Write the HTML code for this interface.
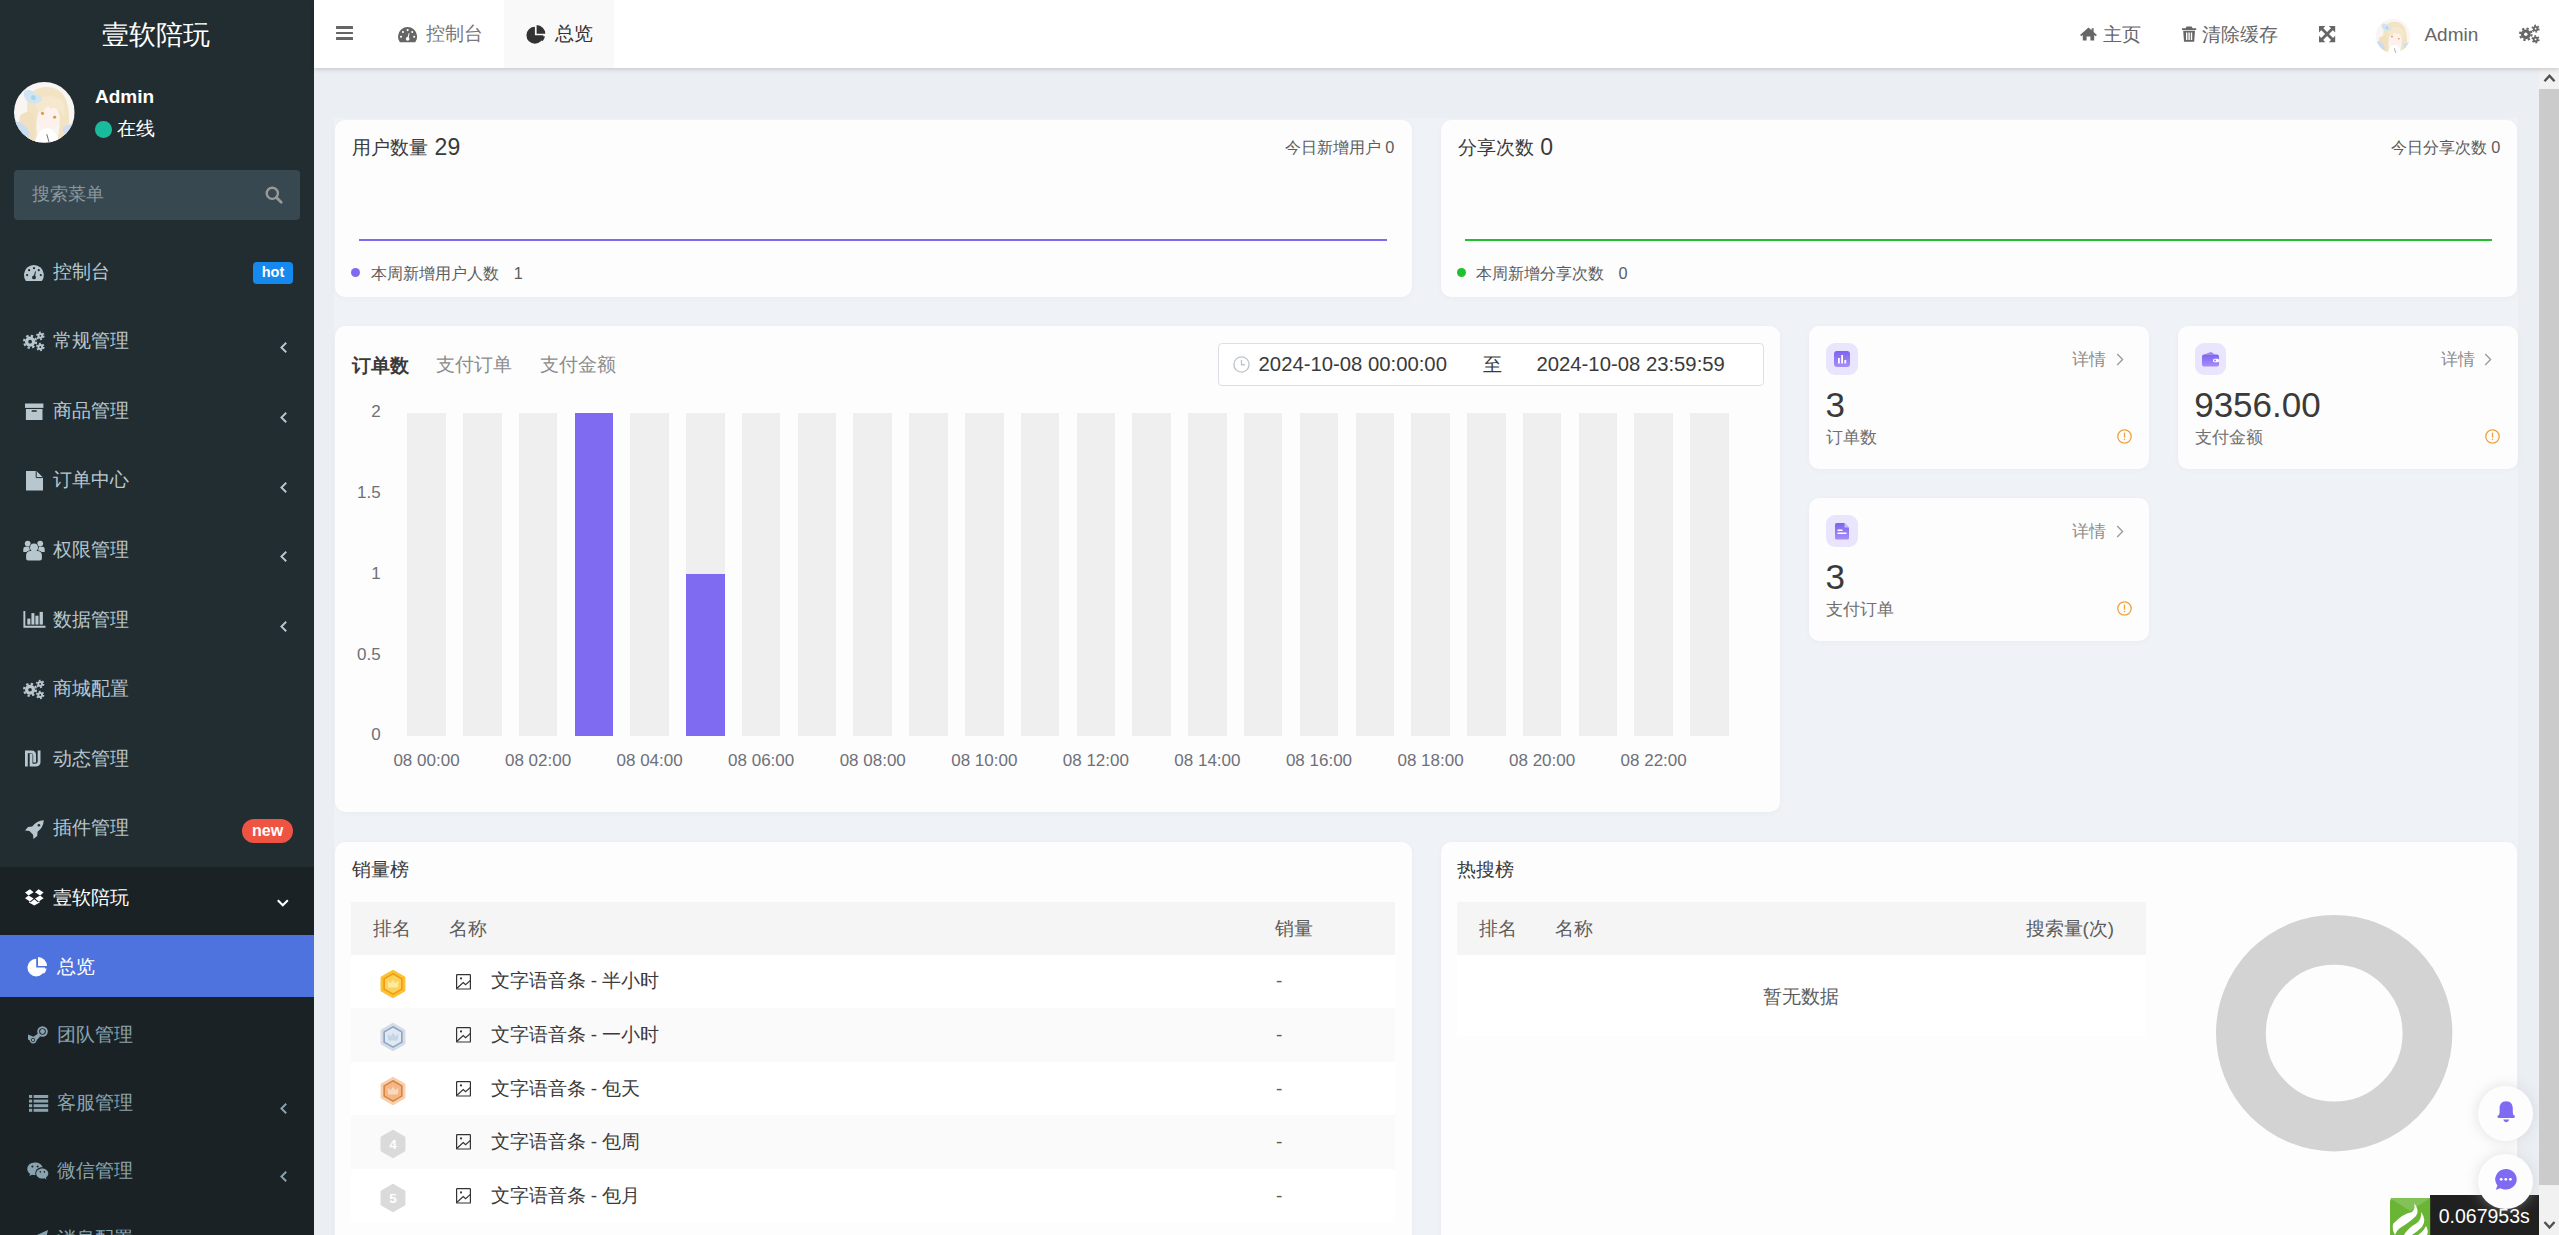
<!DOCTYPE html>
<html><head><meta charset="utf-8">
<style>
*{margin:0;padding:0;box-sizing:border-box}
html,body{width:2559px;height:1235px;overflow:hidden;background:#ebeef3;font-family:"Liberation Sans",sans-serif}
.a{position:absolute;white-space:nowrap}
svg{position:absolute;overflow:visible}
.card{position:absolute;background:#fdfdfd;border-radius:10px;box-shadow:0 1px 6px rgba(0,0,0,.035)}
</style></head><body>
<div class="a" style="left:0;top:0;width:314px;height:1235px;background:#222d32"></div>
<div class="a" style="left:-244px;width:800px;text-align:center;top:7.60px;font-size:27px;line-height:54px;color:#fff;">壹软陪玩</div>
<svg style="left:14.25px;top:82px" width="60.7" height="60.7" viewBox="0 0 100 100"><defs><clipPath id="avc"><circle cx="50" cy="50" r="50"/></clipPath></defs><g clip-path="url(#avc)"><rect x="0" y="0" width="100" height="100" fill="#f8f5f3"/><path d="M22,45 Q18,12 52,8 Q86,8 90,48 Q94,82 84,100 H70 Q78,70 74,52 L40,52 Q34,70 40,100 H26 Q14,75 22,45 Z" fill="#f2e3c4"/><path d="M10,55 Q30,40 34,62 Q36,80 30,100 H12 Q4,80 10,55 Z" fill="#f0e0bf"/><ellipse cx="57" cy="58" rx="18" ry="21" fill="#fcf1ec"/><path d="M34,34 Q52,14 80,30 Q86,44 82,56 Q72,38 60,44 Q56,34 46,52 Q36,46 34,34 Z" fill="#f5e8cc"/><ellipse cx="47" cy="52" rx="2.6" ry="2.4" fill="#d69a4a"/><ellipse cx="67" cy="58" rx="2.6" ry="2.4" fill="#d69a4a"/><path d="M18,14 Q30,10 36,22 Q44,18 46,30 Q38,38 30,34 Q22,36 18,26 Q14,20 18,14 Z" fill="#cfe6f2"/><circle cx="32" cy="26" r="4" fill="#a9d3ea"/><path d="M0,64 Q18,66 26,84 L22,100 H0 Z" fill="#c9dcf0"/><path d="M80,74 Q94,70 100,66 V84 Q90,88 82,86 Z" fill="#cddff0"/><path d="M34,100 Q38,80 54,76 Q70,78 74,100 Z" fill="#ffffff"/><path d="M54,86 L58,100" stroke="#6b6b6b" stroke-width="1.6"/></g></svg>
<div class="a" style="left:95px;top:77.80px;font-size:19px;line-height:38px;color:#fff;font-weight:700;">Admin</div>
<div class="a" style="left:95.3px;top:121px;width:16.5px;height:16.5px;border-radius:50%;background:#18bc9c"></div>
<div class="a" style="left:117px;top:110.30px;font-size:18.8px;line-height:38px;color:#fff;">在线</div>
<div class="a" style="left:14px;top:170px;width:286px;height:50px;background:#374850;border-radius:4px;"></div>
<div class="a" style="left:32px;top:176.40px;font-size:18.2px;line-height:36px;color:#8b979c;">搜索菜单</div>
<svg style="left:265px;top:186px;" width="18" height="18" viewBox="0 0 18 18"><circle cx="7.3" cy="7.3" r="5.6" fill="none" stroke="#999" stroke-width="2.4"/><path d="M11.4,11.4 L16.2,16.2" stroke="#999" stroke-width="2.8" stroke-linecap="round"/></svg>
<div class="a" style="left:53px;top:252.70px;font-size:18.8px;line-height:38px;color:#b8c7ce;">控制台</div>
<svg style="left:24px;top:264.8px;" width="20" height="16.2" viewBox="0 0 20 16.2"><path d="M1.9,15.9 A9.95,9.95 0 1 1 17.9,15.9 Z" fill="#b8c7ce"/><circle cx="3.1" cy="10.1" r="1.1" fill="#222d32"/><circle cx="5.1" cy="5.2" r="1.1" fill="#222d32"/><circle cx="10" cy="3.2" r="1.1" fill="#222d32"/><circle cx="14.75" cy="5.2" r="1.1" fill="#222d32"/><circle cx="16.8" cy="10.1" r="1.1" fill="#222d32"/><path d="M9.4,12 L11.2,6.2 L12,6.4 L10.8,12.4 Z" fill="#222d32"/><circle cx="10" cy="12.4" r="1.9" fill="#222d32"/></svg>
<div class="a" style="left:53px;top:322.26px;font-size:18.8px;line-height:38px;color:#b8c7ce;">常规管理</div>
<svg style="left:23px;top:332px;" width="21.2" height="19" viewBox="0 0 20.3 18.2"><circle cx="6.8" cy="9.3" r="4.9" fill="#b8c7ce"/><circle cx="6.8" cy="9.3" r="5.78" fill="none" stroke="#b8c7ce" stroke-width="2.10" stroke-dasharray="2.27 2.27"/><circle cx="6.8" cy="9.3" r="1.76" fill="#222d32"/><circle cx="16.6" cy="3.7" r="2.8" fill="#b8c7ce"/><circle cx="16.6" cy="3.7" r="3.30" fill="none" stroke="#b8c7ce" stroke-width="1.60" stroke-dasharray="1.73 1.73"/><circle cx="16.6" cy="3.7" r="0.90" fill="#222d32"/><circle cx="16.6" cy="14.4" r="2.8" fill="#b8c7ce"/><circle cx="16.6" cy="14.4" r="3.30" fill="none" stroke="#b8c7ce" stroke-width="1.60" stroke-dasharray="1.73 1.73"/><circle cx="16.6" cy="14.4" r="0.90" fill="#222d32"/></svg>
<svg style="left:279.6px;top:342.46px;" width="7" height="11" viewBox="0 0 7 11"><path d="M6.2,0.8 L1.4,5.5 L6.2,10.2" fill="none" stroke="#b8c7ce" stroke-width="1.9"/></svg>
<div class="a" style="left:53px;top:391.82px;font-size:18.8px;line-height:38px;color:#b8c7ce;">商品管理</div>
<svg style="left:24.7px;top:402.8px;" width="18.4" height="17" viewBox="0 0 18.4 17"><rect x="0" y="0.5" width="18.4" height="4.4" fill="#b8c7ce"/><rect x="0.9" y="6" width="16.6" height="11" fill="#b8c7ce"/><rect x="6.6" y="7.3" width="5.2" height="1.5" rx="0.5" fill="#222d32"/></svg>
<svg style="left:279.6px;top:412.02px;" width="7" height="11" viewBox="0 0 7 11"><path d="M6.2,0.8 L1.4,5.5 L6.2,10.2" fill="none" stroke="#b8c7ce" stroke-width="1.9"/></svg>
<div class="a" style="left:53px;top:461.38px;font-size:18.8px;line-height:38px;color:#b8c7ce;">订单中心</div>
<svg style="left:25.8px;top:470.6px;" width="17" height="19.5" viewBox="0 0 17 19.5"><path d="M0,0 H10.5 L17,6.5 V19.5 H0 Z" fill="#b8c7ce"/><path d="M11.2,0 L17,5.8 H11.2 Z" fill="#222d32" opacity="0"/><path d="M10.2,0.2 V6.6 H16.8" fill="none" stroke="#222d32" stroke-width="1"/></svg>
<svg style="left:279.6px;top:481.58px;" width="7" height="11" viewBox="0 0 7 11"><path d="M6.2,0.8 L1.4,5.5 L6.2,10.2" fill="none" stroke="#b8c7ce" stroke-width="1.9"/></svg>
<div class="a" style="left:53px;top:530.94px;font-size:18.8px;line-height:38px;color:#b8c7ce;">权限管理</div>
<svg style="left:23px;top:540.5px;" width="22" height="19.8" viewBox="0 0 22 19.8"><circle cx="4.7" cy="2.6" r="2.9" fill="#b8c7ce"/><circle cx="17.2" cy="2.6" r="2.9" fill="#b8c7ce"/><path d="M0.3,10.9 V8 Q0.3,5.7 2.5,5.7 H6.8 V10.9 Z" fill="#b8c7ce"/><path d="M21.7,10.9 V8 Q21.7,5.7 19.5,5.7 H15.2 V10.9 Z" fill="#b8c7ce"/><circle cx="11" cy="6.4" r="4.6" fill="#222d32"/><path d="M2.4,19.8 V14.6 Q2.4,9.4 7.5,9.4 H14.5 Q19.6,9.4 19.6,14.6 V19.8 Z" fill="#222d32"/><circle cx="11" cy="6.5" r="3.95" fill="#b8c7ce"/><path d="M3.1,17.4 V14.6 Q3.1,10.1 7.6,10.1 H14.4 Q18.9,10.1 18.9,14.6 V17.4 Q18.9,19.4 16.9,19.4 H5.1 Q3.1,19.4 3.1,17.4 Z" fill="#b8c7ce"/></svg>
<svg style="left:279.6px;top:551.1400000000001px;" width="7" height="11" viewBox="0 0 7 11"><path d="M6.2,0.8 L1.4,5.5 L6.2,10.2" fill="none" stroke="#b8c7ce" stroke-width="1.9"/></svg>
<div class="a" style="left:53px;top:600.50px;font-size:18.8px;line-height:38px;color:#b8c7ce;">数据管理</div>
<svg style="left:22.6px;top:611.3px;" width="22.5" height="16.7" viewBox="0 0 22.5 16.7"><path d="M0.4,0 H2.3 V14.7 H22.5 V16.7 H0.4 Z" fill="#b8c7ce"/><rect x="4.3" y="7.6" width="3.1" height="6" fill="#b8c7ce"/><rect x="8.4" y="2.1" width="3" height="11.5" fill="#b8c7ce"/><rect x="12.4" y="4.7" width="3.1" height="8.9" fill="#b8c7ce"/><rect x="16.6" y="0.9" width="3.3" height="12.7" fill="#b8c7ce"/></svg>
<svg style="left:279.6px;top:620.7px;" width="7" height="11" viewBox="0 0 7 11"><path d="M6.2,0.8 L1.4,5.5 L6.2,10.2" fill="none" stroke="#b8c7ce" stroke-width="1.9"/></svg>
<div class="a" style="left:53px;top:670.06px;font-size:18.8px;line-height:38px;color:#b8c7ce;">商城配置</div>
<svg style="left:23.3px;top:679.6px;" width="21" height="19" viewBox="0 0 20.3 18.2"><circle cx="6.8" cy="9.3" r="4.9" fill="#b8c7ce"/><circle cx="6.8" cy="9.3" r="5.78" fill="none" stroke="#b8c7ce" stroke-width="2.10" stroke-dasharray="2.27 2.27"/><circle cx="6.8" cy="9.3" r="1.76" fill="#222d32"/><circle cx="16.6" cy="3.7" r="2.8" fill="#b8c7ce"/><circle cx="16.6" cy="3.7" r="3.30" fill="none" stroke="#b8c7ce" stroke-width="1.60" stroke-dasharray="1.73 1.73"/><circle cx="16.6" cy="3.7" r="0.90" fill="#222d32"/><circle cx="16.6" cy="14.4" r="2.8" fill="#b8c7ce"/><circle cx="16.6" cy="14.4" r="3.30" fill="none" stroke="#b8c7ce" stroke-width="1.60" stroke-dasharray="1.73 1.73"/><circle cx="16.6" cy="14.4" r="0.90" fill="#222d32"/></svg>
<div class="a" style="left:53px;top:739.62px;font-size:18.8px;line-height:38px;color:#b8c7ce;">动态管理</div>
<svg style="left:25.4px;top:750px;" width="15.6" height="17" viewBox="0 0 15.6 17"><path d="M0,16.5 V0.5 H6.5 Q11,0.5 11,5 V12.5 H8.2 V5.2 Q8.2,3.2 6.3,3.2 H2.8 V16.5 Z" fill="#b8c7ce"/><path d="M15.5,0.5 V12 Q15.5,16.5 10.5,16.5 H4.7 V3.8 H7.5 V13.8 H10.2 Q12.7,13.8 12.7,11.5 V0.5 Z" fill="#b8c7ce"/></svg>
<div class="a" style="left:53px;top:809.18px;font-size:18.8px;line-height:38px;color:#b8c7ce;">插件管理</div>
<svg style="left:24.6px;top:819.7px;" width="19" height="18.8" viewBox="0 0 19 18.8"><path d="M18.8,0.2 Q11.5,0.8 7.2,6.4 L3,6.9 L0,10.6 L4.4,11 L8.1,14.7 L8.4,18.9 L12.2,16 L12.6,11.8 Q18.3,7.4 18.8,0.2 Z" fill="#b8c7ce"/><circle cx="13.9" cy="5.2" r="1.3" fill="#222d32"/></svg>
<div class="a" style="left:253px;top:262px;width:40px;height:22px;border-radius:4px;background:#1689ef;color:#fff;font-weight:700;font-size:14.5px;line-height:21px;text-align:center">hot</div>
<div class="a" style="left:242.3px;top:819px;width:50.5px;height:24px;border-radius:12px;background:#ef5443;color:#fff;font-weight:700;font-size:16px;line-height:23px;text-align:center">new</div>
<div class="a" style="left:0px;top:867px;width:314px;height:368px;background:#1a2226;"></div>
<div class="a" style="left:53px;top:878.70px;font-size:18.8px;line-height:38px;color:#fff;">壹软陪玩</div>
<svg style="left:24.9px;top:888.8px;" width="18.6" height="16.8" viewBox="0 0 18.6 16.8"><path d="M5,0.3 L0,3.6 L3.5,6.4 L8.6,3.3 Z" fill="#fff"/><path d="M13.6,0.3 L18.6,3.6 L15.1,6.4 L10,3.3 Z" fill="#fff"/><path d="M0,9.2 L5,12.5 L8.6,9.5 L3.5,6.4 Z" fill="#fff"/><path d="M18.6,9.2 L13.6,12.5 L10,9.5 L15.1,6.4 Z" fill="#fff"/><path d="M9.3,10.2 L5.7,13.2 L4,12.2 V13.4 L9.3,16.6 L14.6,13.4 V12.2 L12.9,13.2 Z" fill="#fff"/></svg>
<svg style="left:277px;top:899px;" width="11.6" height="8" viewBox="0 0 11.6 7.4"><path d="M0.8,1 L5.8,6 L10.8,1" fill="none" stroke="#fff" stroke-width="2.1"/></svg>
<div class="a" style="left:0px;top:935px;width:314px;height:62px;background:#4e72de;"></div>
<div class="a" style="left:57px;top:947.50px;font-size:18.8px;line-height:38px;color:#fff;">总览</div>
<svg style="left:28px;top:956.5px;" width="19" height="19" viewBox="0 0 19 19"><path d="M8.2,1.8 V10.6 H17 A8.8,8.8 0 1 1 8.2,1.8 Z" fill="#fff"/><path d="M10,0 A9,9 0 0 1 19,9 H10 Z" fill="#fff"/><path d="M10.4,11.6 H18.6 A9,9 0 0 1 16,16.8 Z" fill="#fff"/></svg>
<div class="a" style="left:57px;top:1015.60px;font-size:18.8px;line-height:38px;color:#8aa4af;">团队管理</div>
<svg style="left:28px;top:1026px;" width="20" height="17.5" viewBox="0 0 20 17.5"><circle cx="14.5" cy="5.5" r="5.3" fill="#8aa4af"/><circle cx="14.5" cy="5.5" r="3.3" fill="#1a2226"/><circle cx="14.5" cy="5.5" r="2.4" fill="#8aa4af"/><path d="M0,8.5 L5.5,10.8 L10.2,7.5 L12,10.8 L8.8,14 Q8,17.5 5,17.5 Q2,17.2 1.6,14.2 L0,13.6 Z" fill="#8aa4af"/><circle cx="5" cy="14" r="2.1" fill="#1a2226"/><circle cx="5" cy="14" r="1.3" fill="#8aa4af"/></svg>
<div class="a" style="left:57px;top:1083.60px;font-size:18.8px;line-height:38px;color:#8aa4af;">客服管理</div>
<svg style="left:28.8px;top:1094.5px;" width="19.2" height="16.8" viewBox="0 0 19.2 16.8"><rect x="0" y="0" width="3.2" height="3" fill="#8aa4af"/><rect x="4.6" y="0" width="14.6" height="3" fill="#8aa4af"/><rect x="0" y="4.6" width="3.2" height="3" fill="#8aa4af"/><rect x="4.6" y="4.6" width="14.6" height="3" fill="#8aa4af"/><rect x="0" y="9.2" width="3.2" height="3" fill="#8aa4af"/><rect x="4.6" y="9.2" width="14.6" height="3" fill="#8aa4af"/><rect x="0" y="13.8" width="3.2" height="3" fill="#8aa4af"/><rect x="4.6" y="13.8" width="14.6" height="3" fill="#8aa4af"/></svg>
<svg style="left:279.6px;top:1103.1px;" width="7" height="11" viewBox="0 0 7 11"><path d="M6.2,0.8 L1.4,5.5 L6.2,10.2" fill="none" stroke="#8aa4af" stroke-width="1.9"/></svg>
<div class="a" style="left:57px;top:1151.60px;font-size:18.8px;line-height:38px;color:#8aa4af;">微信管理</div>
<svg style="left:26.8px;top:1161.6px;" width="21.5" height="17.5" viewBox="0 0 21.5 17.5"><path d="M8,0.5 C3.6,0.5 0.3,3.3 0.3,6.9 C0.3,8.9 1.4,10.6 3.1,11.8 L2.4,14 L5,12.7 C6,13 7,13.1 8,13.1 L8.6,13.1 C8.4,12.5 8.3,11.9 8.3,11.3 C8.3,7.9 11.4,5.3 15.3,5.3 L15.6,5.3 C14.8,2.5 11.7,0.5 8,0.5 Z" fill="#8aa4af"/><path d="M15.4,6.4 C11.8,6.4 9.2,8.7 9.2,11.5 C9.2,14.3 11.8,16.6 15.4,16.6 C16.1,16.6 16.8,16.5 17.4,16.3 L19.5,17.4 L18.9,15.6 C20.3,14.6 21.3,13.2 21.3,11.5 C21.3,8.7 18.6,6.4 15.4,6.4 Z" fill="#8aa4af"/><circle cx="5.4" cy="4.6" r="1" fill="#1a2226"/><circle cx="10.6" cy="4.6" r="1" fill="#1a2226"/><circle cx="13.3" cy="9.9" r="0.8" fill="#1a2226"/><circle cx="17.4" cy="9.9" r="0.8" fill="#1a2226"/></svg>
<svg style="left:279.6px;top:1171.1px;" width="7" height="11" viewBox="0 0 7 11"><path d="M6.2,0.8 L1.4,5.5 L6.2,10.2" fill="none" stroke="#8aa4af" stroke-width="1.9"/></svg>
<div class="a" style="left:57px;top:1219.60px;font-size:18.8px;line-height:38px;color:#8aa4af;">消息配置</div>
<svg style="left:28px;top:1230px;" width="20" height="18" viewBox="0 0 20 18"><path d="M20,0 L0,9 L6,11 L8,18 L11,13 L16,17 Z" fill="#8aa4af"/></svg>
<div class="a" style="left:334px;top:118px;width:2184px;height:1117px;background:#eff2f6;"></div>
<div class="card" style="left:335px;top:120px;width:1077px;height:177px"></div>
<div class="a" style="left:352.3px;top:129.40px;font-size:18.8px;line-height:38px;color:#3a3a3a;">用户数量</div>
<div class="a" style="left:434.6px;top:124.00px;font-size:23px;line-height:46px;color:#3a3a3a;">29</div>
<div class="a" style="right:1164.6px;top:131.00px;font-size:16.3px;line-height:33px;color:#5c5c5c;">今日新增用户&nbsp;0</div>
<div class="a" style="left:358.8px;top:238.5px;width:1028.5px;height:2.4px;background:#7f6bf2;"></div>
<div class="a" style="left:351px;top:267.6px;width:9px;height:9px;border-radius:50%;background:#7f6bf2"></div>
<div class="a" style="left:370.8px;top:256.90px;font-size:16.3px;line-height:33px;color:#5c5c5c;">本周新增用户人数</div>
<div class="a" style="left:513.8px;top:256.50px;font-size:16.3px;line-height:33px;color:#5c5c5c;">1</div>
<div class="card" style="left:1441px;top:120px;width:1076px;height:177px"></div>
<div class="a" style="left:1457.5px;top:129.40px;font-size:18.8px;line-height:38px;color:#3a3a3a;">分享次数</div>
<div class="a" style="left:1540.3px;top:124.00px;font-size:23px;line-height:46px;color:#3a3a3a;">0</div>
<div class="a" style="right:58.59999999999991px;top:131.00px;font-size:16.3px;line-height:33px;color:#5c5c5c;">今日分享次数&nbsp;0</div>
<div class="a" style="left:1464.8px;top:238.5px;width:1027.5px;height:2.4px;background:#22c02e;"></div>
<div class="a" style="left:1456.7px;top:267.6px;width:9px;height:9px;border-radius:50%;background:#22c02e"></div>
<div class="a" style="left:1476.4px;top:256.90px;font-size:16.3px;line-height:33px;color:#5c5c5c;">本周新增分享次数</div>
<div class="a" style="left:1618.6px;top:256.50px;font-size:16.3px;line-height:33px;color:#5c5c5c;">0</div>
<div class="card" style="left:335px;top:326px;width:1445px;height:486px"></div>
<div class="a" style="left:351.9px;top:347.00px;font-size:18.8px;line-height:38px;color:#3a3a3a;font-weight:700;">订单数</div>
<div class="a" style="left:436px;top:346.00px;font-size:18.8px;line-height:38px;color:#8c8c8c;">支付订单</div>
<div class="a" style="left:540px;top:346.00px;font-size:18.8px;line-height:38px;color:#8c8c8c;">支付金额</div>
<div class="a" style="left:1218.3px;top:343.4px;width:545.6px;height:42.2px;background:#fff;border:1px solid #dcdfe6;border-radius:4px;"></div>
<svg style="left:1232.8px;top:356.3px;" width="17" height="17" viewBox="0 0 17 17"><circle cx="8.5" cy="8.5" r="7.6" fill="none" stroke="#c0c4cc" stroke-width="1.4"/><path d="M8.5,4 V8.8 H12" fill="none" stroke="#c0c4cc" stroke-width="1.4"/></svg>
<div class="a" style="left:1258.6px;top:344.25px;font-size:20.3px;line-height:41px;color:#3a3a3a;">2024-10-08 00:00:00</div>
<div class="a" style="left:1482.5px;top:345.75px;font-size:18.8px;line-height:38px;color:#3a3a3a;">至</div>
<div class="a" style="left:1536.5px;top:344.25px;font-size:20.3px;line-height:41px;color:#3a3a3a;">2024-10-08 23:59:59</div>
<div class="a" style="right:2178.4px;top:395.10px;font-size:17px;line-height:34px;color:#6e7079;">2</div>
<div class="a" style="right:2178.4px;top:476.00px;font-size:17px;line-height:34px;color:#6e7079;">1.5</div>
<div class="a" style="right:2178.4px;top:557.00px;font-size:17px;line-height:34px;color:#6e7079;">1</div>
<div class="a" style="right:2178.4px;top:637.50px;font-size:17px;line-height:34px;color:#6e7079;">0.5</div>
<div class="a" style="right:2178.4px;top:718.00px;font-size:17px;line-height:34px;color:#6e7079;">0</div>
<div class="a" style="left:407.25px;top:413.1px;width:38.5px;height:322.6px;background:#efefef;"></div>
<div class="a" style="left:463.03px;top:413.1px;width:38.5px;height:322.6px;background:#efefef;"></div>
<div class="a" style="left:518.81px;top:413.1px;width:38.5px;height:322.6px;background:#efefef;"></div>
<div class="a" style="left:574.59px;top:413.1px;width:38.5px;height:322.6px;background:#efefef;"></div>
<div class="a" style="left:574.59px;top:413.1px;width:38.5px;height:322.6px;background:#7f6bf2;"></div>
<div class="a" style="left:630.37px;top:413.1px;width:38.5px;height:322.6px;background:#efefef;"></div>
<div class="a" style="left:686.15px;top:413.1px;width:38.5px;height:322.6px;background:#efefef;"></div>
<div class="a" style="left:686.15px;top:574.4000000000001px;width:38.5px;height:161.3px;background:#7f6bf2;"></div>
<div class="a" style="left:741.93px;top:413.1px;width:38.5px;height:322.6px;background:#efefef;"></div>
<div class="a" style="left:797.71px;top:413.1px;width:38.5px;height:322.6px;background:#efefef;"></div>
<div class="a" style="left:853.49px;top:413.1px;width:38.5px;height:322.6px;background:#efefef;"></div>
<div class="a" style="left:909.27px;top:413.1px;width:38.5px;height:322.6px;background:#efefef;"></div>
<div class="a" style="left:965.05px;top:413.1px;width:38.5px;height:322.6px;background:#efefef;"></div>
<div class="a" style="left:1020.83px;top:413.1px;width:38.5px;height:322.6px;background:#efefef;"></div>
<div class="a" style="left:1076.61px;top:413.1px;width:38.5px;height:322.6px;background:#efefef;"></div>
<div class="a" style="left:1132.39px;top:413.1px;width:38.5px;height:322.6px;background:#efefef;"></div>
<div class="a" style="left:1188.17px;top:413.1px;width:38.5px;height:322.6px;background:#efefef;"></div>
<div class="a" style="left:1243.95px;top:413.1px;width:38.5px;height:322.6px;background:#efefef;"></div>
<div class="a" style="left:1299.73px;top:413.1px;width:38.5px;height:322.6px;background:#efefef;"></div>
<div class="a" style="left:1355.51px;top:413.1px;width:38.5px;height:322.6px;background:#efefef;"></div>
<div class="a" style="left:1411.29px;top:413.1px;width:38.5px;height:322.6px;background:#efefef;"></div>
<div class="a" style="left:1467.07px;top:413.1px;width:38.5px;height:322.6px;background:#efefef;"></div>
<div class="a" style="left:1522.85px;top:413.1px;width:38.5px;height:322.6px;background:#efefef;"></div>
<div class="a" style="left:1578.63px;top:413.1px;width:38.5px;height:322.6px;background:#efefef;"></div>
<div class="a" style="left:1634.41px;top:413.1px;width:38.5px;height:322.6px;background:#efefef;"></div>
<div class="a" style="left:1690.19px;top:413.1px;width:38.5px;height:322.6px;background:#efefef;"></div>
<div class="a" style="left:26.5px;width:800px;text-align:center;top:744.00px;font-size:17px;line-height:34px;color:#6e7079;">08 00:00</div>
<div class="a" style="left:138.05999999999995px;width:800px;text-align:center;top:744.00px;font-size:17px;line-height:34px;color:#6e7079;">08 02:00</div>
<div class="a" style="left:249.62px;width:800px;text-align:center;top:744.00px;font-size:17px;line-height:34px;color:#6e7079;">08 04:00</div>
<div class="a" style="left:361.18000000000006px;width:800px;text-align:center;top:744.00px;font-size:17px;line-height:34px;color:#6e7079;">08 06:00</div>
<div class="a" style="left:472.74px;width:800px;text-align:center;top:744.00px;font-size:17px;line-height:34px;color:#6e7079;">08 08:00</div>
<div class="a" style="left:584.3px;width:800px;text-align:center;top:744.00px;font-size:17px;line-height:34px;color:#6e7079;">08 10:00</div>
<div class="a" style="left:695.8600000000001px;width:800px;text-align:center;top:744.00px;font-size:17px;line-height:34px;color:#6e7079;">08 12:00</div>
<div class="a" style="left:807.4200000000001px;width:800px;text-align:center;top:744.00px;font-size:17px;line-height:34px;color:#6e7079;">08 14:00</div>
<div class="a" style="left:918.98px;width:800px;text-align:center;top:744.00px;font-size:17px;line-height:34px;color:#6e7079;">08 16:00</div>
<div class="a" style="left:1030.54px;width:800px;text-align:center;top:744.00px;font-size:17px;line-height:34px;color:#6e7079;">08 18:00</div>
<div class="a" style="left:1142.1px;width:800px;text-align:center;top:744.00px;font-size:17px;line-height:34px;color:#6e7079;">08 20:00</div>
<div class="a" style="left:1253.66px;width:800px;text-align:center;top:744.00px;font-size:17px;line-height:34px;color:#6e7079;">08 22:00</div>
<div class="card" style="left:1809px;top:326px;width:340px;height:143px"></div>
<div class="a" style="left:1826.1px;top:343.1px;width:31.7px;height:31.7px;background:#e9e5fd;border-radius:9px;"></div>
<svg style="left:1834.0px;top:351.0px;" width="16" height="16" viewBox="0 0 16 16"><defs><linearGradient id="gbar" x1="0" y1="0" x2="0" y2="1"><stop offset="0" stop-color="#7e63f0"/><stop offset="1" stop-color="#a78ff7"/></linearGradient></defs><rect x="0" y="0" width="16" height="16" rx="3" fill="url(#gbar)"/><rect x="4" y="7" width="1.8" height="5.5" fill="#fff"/><rect x="7.2" y="4" width="1.8" height="8.5" fill="#fff"/><rect x="10.4" y="9" width="1.8" height="3.5" fill="#fff"/></svg>
<div class="a" style="left:2072.3px;top:342.70px;font-size:16.5px;line-height:33px;color:#8c8c8c;">详情</div>
<svg style="left:2115.5px;top:353.0px;" width="8" height="13" viewBox="0 0 8 13"><path d="M1.2,1 L6.6,6.5 L1.2,12" fill="none" stroke="#999" stroke-width="1.3"/></svg>
<div class="a" style="left:1825.6px;top:370.00px;font-size:35px;line-height:70px;color:#3a3a3a;">3</div>
<div class="a" style="left:1826px;top:420.60px;font-size:16.5px;line-height:33px;color:#707070;">订单数</div>
<svg style="left:2116.7px;top:428.5px;" width="15" height="15" viewBox="0 0 15 15"><circle cx="7.5" cy="7.5" r="6.7" fill="none" stroke="#f0a33a" stroke-width="1.3"/><rect x="6.85" y="3.6" width="1.3" height="5" fill="#f0a33a"/><rect x="6.85" y="9.8" width="1.3" height="1.4" fill="#f0a33a"/></svg>
<div class="card" style="left:2177.6px;top:326px;width:340px;height:143px"></div>
<div class="a" style="left:2194.7px;top:343.1px;width:31.7px;height:31.7px;background:#e9e5fd;border-radius:9px;"></div>
<svg style="left:2202.1px;top:351.5px;" width="17" height="15" viewBox="0 0 17 15"><defs><linearGradient id="gwallet" x1="0" y1="0" x2="0" y2="1"><stop offset="0" stop-color="#7e63f0"/><stop offset="1" stop-color="#a78ff7"/></linearGradient></defs><path d="M9,0 L13,2.5 H2 Z" fill="#9b86f5"/><rect x="0" y="2.5" width="17" height="12" rx="2" fill="url(#gwallet)"/><rect x="11" y="6.8" width="6" height="3.4" rx="1.5" fill="#fff"/><circle cx="13" cy="8.5" r="0.9" fill="#8b74f2"/></svg>
<div class="a" style="left:2440.9px;top:342.70px;font-size:16.5px;line-height:33px;color:#8c8c8c;">详情</div>
<svg style="left:2484.1px;top:353.0px;" width="8" height="13" viewBox="0 0 8 13"><path d="M1.2,1 L6.6,6.5 L1.2,12" fill="none" stroke="#999" stroke-width="1.3"/></svg>
<div class="a" style="left:2194.2px;top:370.00px;font-size:35px;line-height:70px;color:#3a3a3a;">9356.00</div>
<div class="a" style="left:2194.6px;top:420.60px;font-size:16.5px;line-height:33px;color:#707070;">支付金额</div>
<svg style="left:2485.2999999999997px;top:428.5px;" width="15" height="15" viewBox="0 0 15 15"><circle cx="7.5" cy="7.5" r="6.7" fill="none" stroke="#f0a33a" stroke-width="1.3"/><rect x="6.85" y="3.6" width="1.3" height="5" fill="#f0a33a"/><rect x="6.85" y="9.8" width="1.3" height="1.4" fill="#f0a33a"/></svg>
<div class="card" style="left:1809px;top:498px;width:340px;height:143px"></div>
<div class="a" style="left:1826.1px;top:515.1px;width:31.7px;height:31.7px;background:#e9e5fd;border-radius:9px;"></div>
<svg style="left:1835.1px;top:522.7px;" width="14" height="16.5" viewBox="0 0 14 16.5"><defs><linearGradient id="gdoc" x1="0" y1="0" x2="0" y2="1"><stop offset="0" stop-color="#7e63f0"/><stop offset="1" stop-color="#a78ff7"/></linearGradient></defs><path d="M0,1.5 Q0,0 1.5,0 H9.5 L14,4.5 V15 Q14,16.5 12.5,16.5 H1.5 Q0,16.5 0,15 Z" fill="url(#gdoc)"/><path d="M9.5,0 V4.5 H14" fill="#c9bcfa"/><rect x="2.5" y="6.5" width="5" height="1.5" fill="#fff"/><rect x="2.5" y="9.5" width="9" height="1.5" fill="#fff"/></svg>
<div class="a" style="left:2072.3px;top:514.70px;font-size:16.5px;line-height:33px;color:#8c8c8c;">详情</div>
<svg style="left:2115.5px;top:525.0px;" width="8" height="13" viewBox="0 0 8 13"><path d="M1.2,1 L6.6,6.5 L1.2,12" fill="none" stroke="#999" stroke-width="1.3"/></svg>
<div class="a" style="left:1825.6px;top:542.00px;font-size:35px;line-height:70px;color:#3a3a3a;">3</div>
<div class="a" style="left:1826px;top:592.60px;font-size:16.5px;line-height:33px;color:#707070;">支付订单</div>
<svg style="left:2116.7px;top:600.5px;" width="15" height="15" viewBox="0 0 15 15"><circle cx="7.5" cy="7.5" r="6.7" fill="none" stroke="#f0a33a" stroke-width="1.3"/><rect x="6.85" y="3.6" width="1.3" height="5" fill="#f0a33a"/><rect x="6.85" y="9.8" width="1.3" height="1.4" fill="#f0a33a"/></svg>
<div class="card" style="left:335px;top:842px;width:1077px;height:450px"></div>
<div class="a" style="left:351.7px;top:850.70px;font-size:18.8px;line-height:38px;color:#3a3a3a;">销量榜</div>
<div class="a" style="left:350.8px;top:901.5px;width:1044.1px;height:53px;background:#f5f5f5;"></div>
<div class="a" style="left:373.4px;top:910.00px;font-size:18.8px;line-height:38px;color:#5c5c5c;">排名</div>
<div class="a" style="left:449.3px;top:910.00px;font-size:18.8px;line-height:38px;color:#5c5c5c;">名称</div>
<div class="a" style="left:1274.7px;top:910.00px;font-size:18.8px;line-height:38px;color:#5c5c5c;">销量</div>
<div class="a" style="left:350.8px;top:954.5px;width:1044.1px;height:53.6px;background:#fff;"></div>
<svg style="left:379.6px;top:969.5px;" width="26" height="28" viewBox="0 0 26 28"><polygon points="13.00,0.20 24.95,7.10 24.95,20.90 13.00,27.80 1.05,20.90 1.05,7.10" fill="#fbc230" stroke="#fbc230" stroke-width="1" stroke-linejoin="round"/><polygon points="13.00,3.80 21.83,8.90 21.83,19.10 13.00,24.20 4.17,19.10 4.17,8.90" fill="#fcd25a" stroke="#f29a12" stroke-width="1.6"/><path d="M8.2,17.5 L7.6,10.8 L10.6,13.2 L13,9.6 L15.4,13.2 L18.4,10.8 L17.8,17.5 Z" fill="#fde9a0"/></svg>
<svg style="left:456px;top:973.5px;" width="15" height="15.6" viewBox="0 0 15 15.6"><rect x="0.6" y="0.6" width="13.8" height="14.4" rx="0.6" fill="none" stroke="#333" stroke-width="1.2"/><path d="M1,14.2 L7.2,8.6 L9.6,10.8 L14.4,6.4" fill="none" stroke="#333" stroke-width="1.2"/><circle cx="5" cy="4.4" r="1.05" fill="#333"/></svg>
<div class="a" style="left:490.5px;top:962.30px;font-size:19px;line-height:38px;color:#3a3a3a;">文字语音条 - 半小时</div>
<div class="a" style="left:1276px;top:962.30px;font-size:19px;line-height:38px;color:#5c5c5c;">-</div>
<div class="a" style="left:350.8px;top:1008.1px;width:1044.1px;height:53.6px;background:#fafafa;"></div>
<svg style="left:379.6px;top:1023.1000000000001px;" width="26" height="28" viewBox="0 0 26 28"><polygon points="13.00,0.20 24.95,7.10 24.95,20.90 13.00,27.80 1.05,20.90 1.05,7.10" fill="#d3dce7" stroke="#d3dce7" stroke-width="1" stroke-linejoin="round"/><polygon points="13.00,3.80 21.83,8.90 21.83,19.10 13.00,24.20 4.17,19.10 4.17,8.90" fill="#dfe8f3" stroke="#8ea4bf" stroke-width="1.6"/><path d="M8.2,17.5 L7.6,10.8 L10.6,13.2 L13,9.6 L15.4,13.2 L18.4,10.8 L17.8,17.5 Z" fill="#c5d5e8"/></svg>
<svg style="left:456px;top:1027.1000000000001px;" width="15" height="15.6" viewBox="0 0 15 15.6"><rect x="0.6" y="0.6" width="13.8" height="14.4" rx="0.6" fill="none" stroke="#333" stroke-width="1.2"/><path d="M1,14.2 L7.2,8.6 L9.6,10.8 L14.4,6.4" fill="none" stroke="#333" stroke-width="1.2"/><circle cx="5" cy="4.4" r="1.05" fill="#333"/></svg>
<div class="a" style="left:490.5px;top:1015.90px;font-size:19px;line-height:38px;color:#3a3a3a;">文字语音条 - 一小时</div>
<div class="a" style="left:1276px;top:1015.90px;font-size:19px;line-height:38px;color:#5c5c5c;">-</div>
<div class="a" style="left:350.8px;top:1061.7px;width:1044.1px;height:53.6px;background:#fff;"></div>
<svg style="left:379.6px;top:1076.7px;" width="26" height="28" viewBox="0 0 26 28"><polygon points="13.00,0.20 24.95,7.10 24.95,20.90 13.00,27.80 1.05,20.90 1.05,7.10" fill="#f6cfae" stroke="#f6cfae" stroke-width="1" stroke-linejoin="round"/><polygon points="13.00,3.80 21.83,8.90 21.83,19.10 13.00,24.20 4.17,19.10 4.17,8.90" fill="#f2b687" stroke="#d9853e" stroke-width="1.6"/><path d="M8.2,17.5 L7.6,10.8 L10.6,13.2 L13,9.6 L15.4,13.2 L18.4,10.8 L17.8,17.5 Z" fill="#f8d9bd"/></svg>
<svg style="left:456px;top:1080.7px;" width="15" height="15.6" viewBox="0 0 15 15.6"><rect x="0.6" y="0.6" width="13.8" height="14.4" rx="0.6" fill="none" stroke="#333" stroke-width="1.2"/><path d="M1,14.2 L7.2,8.6 L9.6,10.8 L14.4,6.4" fill="none" stroke="#333" stroke-width="1.2"/><circle cx="5" cy="4.4" r="1.05" fill="#333"/></svg>
<div class="a" style="left:490.5px;top:1069.50px;font-size:19px;line-height:38px;color:#3a3a3a;">文字语音条 - 包天</div>
<div class="a" style="left:1276px;top:1069.50px;font-size:19px;line-height:38px;color:#5c5c5c;">-</div>
<div class="a" style="left:350.8px;top:1115.3px;width:1044.1px;height:53.6px;background:#fafafa;"></div>
<svg style="left:379.6px;top:1130.3px;" width="26" height="28" viewBox="0 0 26 28"><polygon points="13.00,0.20 24.95,7.10 24.95,20.90 13.00,27.80 1.05,20.90 1.05,7.10" fill="#dadada" stroke="#dadada" stroke-width="1" stroke-linejoin="round"/><text x="13" y="18.8" text-anchor="middle" font-family="Liberation Sans" font-weight="700" font-size="13.5" fill="#fff">4</text></svg>
<svg style="left:456px;top:1134.3px;" width="15" height="15.6" viewBox="0 0 15 15.6"><rect x="0.6" y="0.6" width="13.8" height="14.4" rx="0.6" fill="none" stroke="#333" stroke-width="1.2"/><path d="M1,14.2 L7.2,8.6 L9.6,10.8 L14.4,6.4" fill="none" stroke="#333" stroke-width="1.2"/><circle cx="5" cy="4.4" r="1.05" fill="#333"/></svg>
<div class="a" style="left:490.5px;top:1123.10px;font-size:19px;line-height:38px;color:#3a3a3a;">文字语音条 - 包周</div>
<div class="a" style="left:1276px;top:1123.10px;font-size:19px;line-height:38px;color:#5c5c5c;">-</div>
<div class="a" style="left:350.8px;top:1168.9px;width:1044.1px;height:53.6px;background:#fff;"></div>
<svg style="left:379.6px;top:1183.9px;" width="26" height="28" viewBox="0 0 26 28"><polygon points="13.00,0.20 24.95,7.10 24.95,20.90 13.00,27.80 1.05,20.90 1.05,7.10" fill="#dadada" stroke="#dadada" stroke-width="1" stroke-linejoin="round"/><text x="13" y="18.8" text-anchor="middle" font-family="Liberation Sans" font-weight="700" font-size="13.5" fill="#fff">5</text></svg>
<svg style="left:456px;top:1187.9px;" width="15" height="15.6" viewBox="0 0 15 15.6"><rect x="0.6" y="0.6" width="13.8" height="14.4" rx="0.6" fill="none" stroke="#333" stroke-width="1.2"/><path d="M1,14.2 L7.2,8.6 L9.6,10.8 L14.4,6.4" fill="none" stroke="#333" stroke-width="1.2"/><circle cx="5" cy="4.4" r="1.05" fill="#333"/></svg>
<div class="a" style="left:490.5px;top:1176.70px;font-size:19px;line-height:38px;color:#3a3a3a;">文字语音条 - 包月</div>
<div class="a" style="left:1276px;top:1176.70px;font-size:19px;line-height:38px;color:#5c5c5c;">-</div>
<div class="card" style="left:1441px;top:842px;width:1076px;height:450px"></div>
<div class="a" style="left:1457.4px;top:850.50px;font-size:18.8px;line-height:38px;color:#3a3a3a;">热搜榜</div>
<div class="a" style="left:1457.4px;top:901.6px;width:688.2px;height:53px;background:#f5f5f5;"></div>
<div class="a" style="left:1478.5px;top:910.00px;font-size:18.8px;line-height:38px;color:#5c5c5c;">排名</div>
<div class="a" style="left:1554.9px;top:910.00px;font-size:18.8px;line-height:38px;color:#5c5c5c;">名称</div>
<div class="a" style="left:2025.6px;top:910.00px;font-size:18.8px;line-height:38px;color:#5c5c5c;">搜索量(次)</div>
<div class="a" style="left:1457.4px;top:954.6px;width:688.2px;height:81.6px;background:#fff;"></div>
<div class="a" style="left:1763px;top:977.50px;font-size:18.8px;line-height:38px;color:#5c5c5c;">暂无数据</div>
<svg style="left:2216.3px;top:914.7px;" width="236.4" height="236.4" viewBox="0 0 236.4 236.4"><circle cx="118.2" cy="118.2" r="93.3" fill="none" stroke="#d3d3d3" stroke-width="49.8"/></svg>
<div class="a" style="left:2430px;top:1195px;width:109px;height:40px;background:#202020;"></div>
<div class="a" style="left:2438.7px;top:1196.60px;font-size:19.5px;line-height:39px;color:#fff;">0.067953s</div>
<svg style="left:2389.8px;top:1197.9px;" width="40.2" height="37.1" viewBox="0 0 40.2 37.1"><path d="M4,0 H40.2 V37.1 H0 V4 Q0,0 4,0 Z" fill="#6bb536"/><path d="M0,0 L20.1,13 L40.2,0 Z" fill="#82c257"/><path d="M3,26 Q12,16 22,14 Q26,10 24,5 Q30,12 26,18 Q20,24 10,30 Q6,33 5,37 Q2,32 3,26 Z" fill="#fff"/><path d="M14,37 Q18,30 27,25 Q32,21 31,14 Q37,22 32,29 Q28,33 22,37 Z" fill="#fff"/><path d="M28,37 Q33,34 36,28 Q39,33 37,37 Z" fill="#fff"/></svg>
<div class="a" style="left:2477.6000000000004px;top:1085.8999999999999px;width:55.4px;height:55.4px;border-radius:50%;background:#fdfdfd;box-shadow:0 0 14px rgba(190,190,190,.45)"></div>
<div class="a" style="left:2477.6000000000004px;top:1153.6px;width:55.4px;height:55.4px;border-radius:50%;background:#fdfdfd;box-shadow:0 0 14px rgba(190,190,190,.45)"></div>
<svg style="left:2496.8px;top:1101px;" width="18.4" height="21.4" viewBox="0 0 18.4 21.4"><path d="M9.2,0.3 C4.4,0.3 2.6,3.6 2.6,7.6 V11.4 Q2.6,13.8 0.6,14.8 Q-0.2,16.9 1.6,17.1 H16.8 Q18.6,16.9 17.8,14.8 Q15.8,13.8 15.8,11.4 V7.6 C15.8,3.6 14,0.3 9.2,0.3 Z" fill="#7f6bf2"/><path d="M6.2,18.6 H12.2 Q11.5,21.2 9.2,21.2 Q6.9,21.2 6.2,18.6 Z" fill="#7f6bf2"/></svg>
<svg style="left:2495px;top:1169px;" width="21.6" height="20.7" viewBox="0 0 21.6 20.7"><path d="M10.8,0 A10.8,10.3 0 1 1 5.5,19.2 L0.8,20.7 L2.4,16.4 A10.8,10.3 0 0 1 10.8,0 Z" fill="#7f6bf2"/><circle cx="6.2" cy="10.3" r="1.4" fill="#fff"/><circle cx="10.8" cy="10.3" r="1.4" fill="#fff"/><circle cx="15.4" cy="10.3" r="1.4" fill="#fff"/></svg>
<div class="a" style="left:2539px;top:68px;width:20px;height:1167px;background:#f1f1f1;"></div>
<div class="a" style="left:2539px;top:89px;width:20px;height:1096px;background:#cbcbcb;"></div>
<svg style="left:2543.5px;top:73.5px;" width="11" height="8" viewBox="0 0 11 8"><path d="M0.5,7.3 L5.5,1.8 L10.5,7.3" fill="none" stroke="#505050" stroke-width="2.4"/></svg>
<svg style="left:2543.5px;top:1221px;" width="11" height="8" viewBox="0 0 11 8"><path d="M0.5,1 L5.5,6.5 L10.5,1" fill="none" stroke="#505050" stroke-width="2.4"/></svg>
<div class="a" style="left:314px;top:0;width:2245px;height:68px;background:#fff;box-shadow:0 1px 5px rgba(0,0,0,.2);z-index:5">
</div>
<div class="a" style="left:0;top:0;width:2559px;height:68px;z-index:6">
<div class="a" style="left:336.3px;top:26.3px;width:16.5px;height:2.7px;background:#666;border-radius:0.5px;"></div>
<div class="a" style="left:336.3px;top:31.8px;width:16.5px;height:2.7px;background:#666;border-radius:0.5px;"></div>
<div class="a" style="left:336.3px;top:37.3px;width:16.5px;height:2.7px;background:#666;border-radius:0.5px;"></div>
<svg style="left:398px;top:26.9px;" width="19.3" height="15.6" viewBox="0 0 20 16.2"><path d="M1.9,15.9 A9.95,9.95 0 1 1 17.9,15.9 Z" fill="#666"/><circle cx="3.1" cy="10.1" r="1.1" fill="#fff"/><circle cx="5.1" cy="5.2" r="1.1" fill="#fff"/><circle cx="10" cy="3.2" r="1.1" fill="#fff"/><circle cx="14.75" cy="5.2" r="1.1" fill="#fff"/><circle cx="16.8" cy="10.1" r="1.1" fill="#fff"/><path d="M9.4,12 L11.2,6.2 L12,6.4 L10.8,12.4 Z" fill="#fff"/><circle cx="10" cy="12.4" r="1.9" fill="#fff"/></svg>
<div class="a" style="left:425.5px;top:15.00px;font-size:18.8px;line-height:38px;color:#777;">控制台</div>
<div class="a" style="left:504px;top:0px;width:110px;height:68px;background:#f9f9f9;"></div>
<svg style="left:527px;top:25px;" width="18.3" height="18" viewBox="0 0 19 18.5"><path d="M8.2,1.8 V10.6 H17 A8.8,8.8 0 1 1 8.2,1.8 Z" fill="#333"/><path d="M10,0 A9,9 0 0 1 19,9 H10 Z" fill="#333"/><path d="M10.4,11.6 H18.6 A9,9 0 0 1 16,16.8 Z" fill="#333"/></svg>
<div class="a" style="left:554.6px;top:15.30px;font-size:18.8px;line-height:38px;color:#333;">总览</div>
<svg style="left:2080px;top:27.4px;" width="17" height="13.6" viewBox="0 0 17 13.6"><path d="M8.5,0.5 L0,8 L1.3,9.3 L2.8,8 V13.5 H6.6 V9.5 H10.4 V13.5 H14.2 V8 L15.7,9.3 L17,8 L13.6,5 V1.2 H11.6 V3.2 Z" fill="#666"/></svg>
<div class="a" style="left:2103px;top:15.90px;font-size:18.8px;line-height:38px;color:#666;">主页</div>
<svg style="left:2182px;top:26.4px;" width="14.2" height="15.8" viewBox="0 0 14.2 15.8"><path d="M4.6,0.5 H9.6 L10.6,2.2 H14.2 V4 H0 V2.2 H3.6 Z" fill="#666"/><path d="M1.2,4.8 H13 L12.2,15.8 H2 Z" fill="#666"/><rect x="4" y="6.5" width="1.4" height="7.5" fill="#fff"/><rect x="6.4" y="6.5" width="1.4" height="7.5" fill="#fff"/><rect x="8.8" y="6.5" width="1.4" height="7.5" fill="#fff"/></svg>
<div class="a" style="left:2202.3px;top:15.90px;font-size:18.8px;line-height:38px;color:#666;">清除缓存</div>
<svg style="left:2319px;top:25.9px;" width="16.2" height="16.2" viewBox="0 0 16.2 16.2"><path d="M2.6,2.6 L13.6,13.6 M13.6,2.6 L2.6,13.6" stroke="#666" stroke-width="2.8"/><path d="M0,0 H6.4 L0,6.4 Z M16.2,0 H9.8 L16.2,6.4 Z M0,16.2 H6.4 L0,9.8 Z M16.2,16.2 H9.8 L16.2,9.8 Z" fill="#666"/></svg>
<svg style="left:2375.7px;top:19.3px" width="34" height="34" viewBox="0 0 100 100"><defs><clipPath id="avc"><circle cx="50" cy="50" r="50"/></clipPath></defs><g clip-path="url(#avc)"><rect x="0" y="0" width="100" height="100" fill="#f8f5f3"/><path d="M22,45 Q18,12 52,8 Q86,8 90,48 Q94,82 84,100 H70 Q78,70 74,52 L40,52 Q34,70 40,100 H26 Q14,75 22,45 Z" fill="#f2e3c4"/><path d="M10,55 Q30,40 34,62 Q36,80 30,100 H12 Q4,80 10,55 Z" fill="#f0e0bf"/><ellipse cx="57" cy="58" rx="18" ry="21" fill="#fcf1ec"/><path d="M34,34 Q52,14 80,30 Q86,44 82,56 Q72,38 60,44 Q56,34 46,52 Q36,46 34,34 Z" fill="#f5e8cc"/><ellipse cx="47" cy="52" rx="2.6" ry="2.4" fill="#d69a4a"/><ellipse cx="67" cy="58" rx="2.6" ry="2.4" fill="#d69a4a"/><path d="M18,14 Q30,10 36,22 Q44,18 46,30 Q38,38 30,34 Q22,36 18,26 Q14,20 18,14 Z" fill="#cfe6f2"/><circle cx="32" cy="26" r="4" fill="#a9d3ea"/><path d="M0,64 Q18,66 26,84 L22,100 H0 Z" fill="#c9dcf0"/><path d="M80,74 Q94,70 100,66 V84 Q90,88 82,86 Z" fill="#cddff0"/><path d="M34,100 Q38,80 54,76 Q70,78 74,100 Z" fill="#ffffff"/><path d="M54,86 L58,100" stroke="#6b6b6b" stroke-width="1.6"/></g></svg>
<div class="a" style="left:2424.4px;top:15.50px;font-size:19px;line-height:38px;color:#666;">Admin</div>
<svg style="left:2519px;top:25.1px;" width="20.3" height="18.2" viewBox="0 0 20.3 18.2"><circle cx="6.8" cy="9.3" r="4.9" fill="#666"/><circle cx="6.8" cy="9.3" r="5.78" fill="none" stroke="#666" stroke-width="2.10" stroke-dasharray="2.27 2.27"/><circle cx="6.8" cy="9.3" r="1.76" fill="#fff"/><circle cx="16.6" cy="3.7" r="2.8" fill="#666"/><circle cx="16.6" cy="3.7" r="3.30" fill="none" stroke="#666" stroke-width="1.60" stroke-dasharray="1.73 1.73"/><circle cx="16.6" cy="3.7" r="0.90" fill="#fff"/><circle cx="16.6" cy="14.4" r="2.8" fill="#666"/><circle cx="16.6" cy="14.4" r="3.30" fill="none" stroke="#666" stroke-width="1.60" stroke-dasharray="1.73 1.73"/><circle cx="16.6" cy="14.4" r="0.90" fill="#fff"/></svg>
</div>
</body></html>
